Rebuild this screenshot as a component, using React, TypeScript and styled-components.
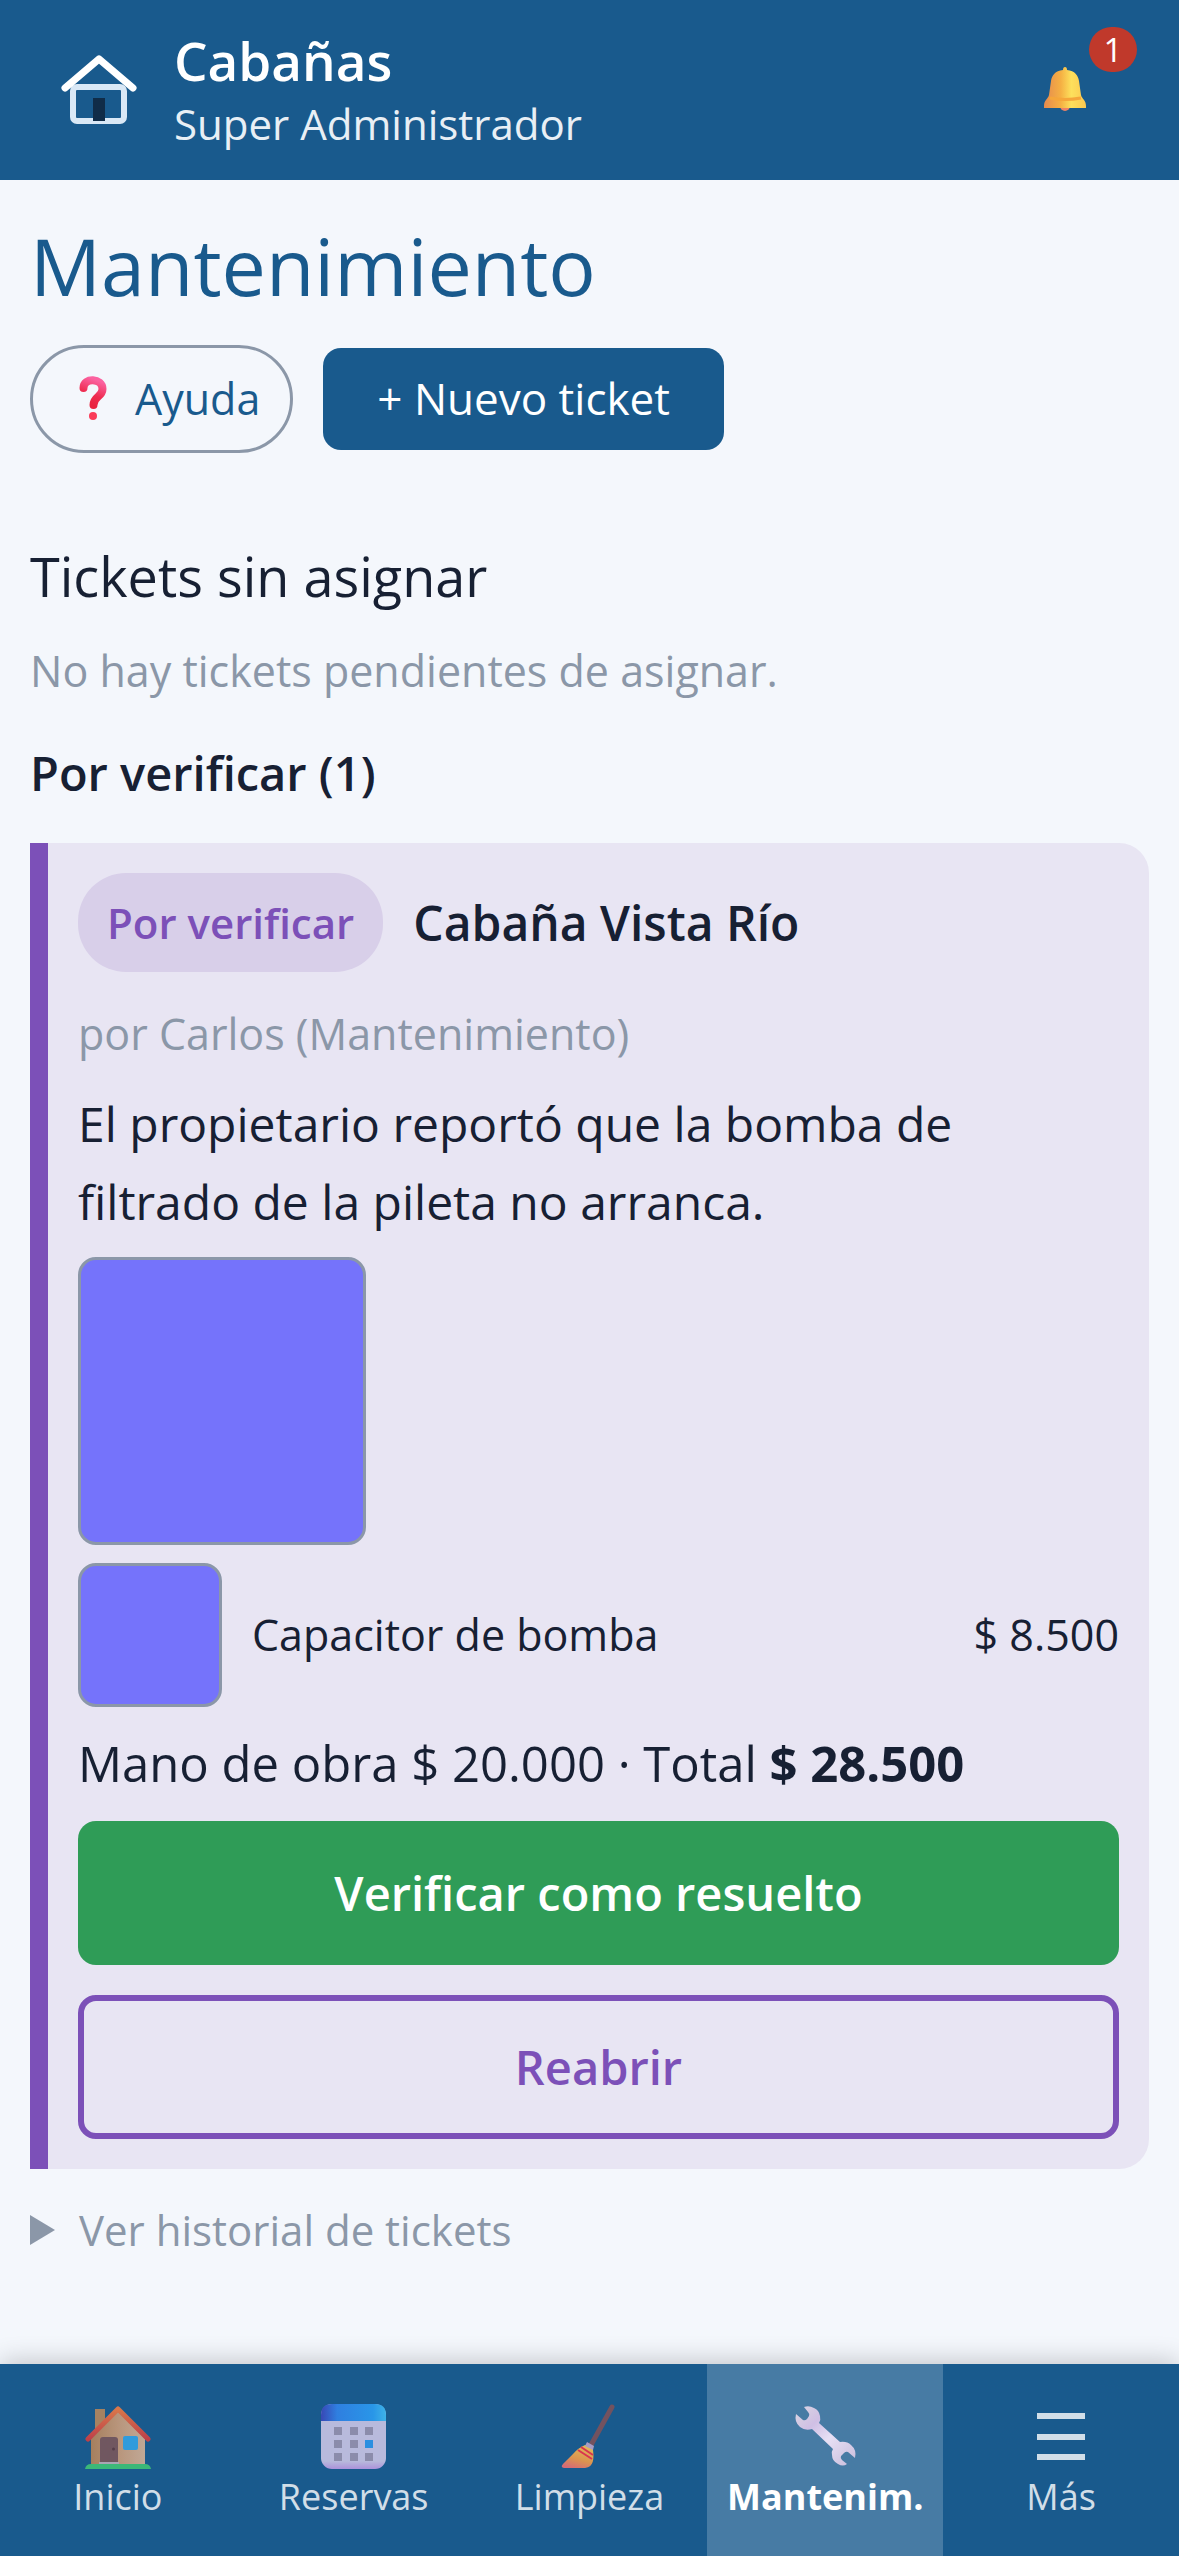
import React from 'react';
import styled, { createGlobalStyle } from 'styled-components';

const color = {
  primary: '#195a8d',
  page: '#f4f7fc',
  ink: '#172033',
  muted: '#8b97a8',
  violet: '#7c50b8',
  lilac: '#e8e5f3',
  lilacDeep: '#d8cfe9',
  green: '#2f9c57',
  red: '#c0392b',
  photo: '#7573fb',
};

const GlobalStyle = createGlobalStyle`
  *, *::before, *::after { box-sizing: border-box; }
  body { margin: 0; background: ${color.page}; color: ${color.ink}; font-family: "Segoe UI", "Open Sans", "Noto Sans", sans-serif; }
  h1, h2, h3, h4, p { margin: 0; padding: 0; }
  button { font-family: inherit; cursor: pointer; }
`;

const Page = styled.div`
  display: flex;
  flex-direction: column;
  min-height: 100vh;
`;

const Header = styled.header`
  display: flex;
  align-items: center;
  min-height: 180px;
  padding: 0 42px 0 60px;
  background: ${color.primary};
  color: #fff;
`;

const Brand = styled.div`
  display: flex;
  flex: 1;
  flex-direction: column;
  padding: 2px 0 0 36px;
`;

const BrandName = styled.span`
  font-size: 53px;
  font-weight: 600;
  line-height: 66px;
`;

const Role = styled.span`
  color: #e8eff5;
  font-size: 42px;
  line-height: 60px;
`;

const BellButton = styled.button`
  position: relative;
  display: grid;
  place-items: center;
  width: 144px;
  height: 132px;
  padding: 0 0 3px;
  border: 0;
  background: none;
`;

const Count = styled.span`
  position: absolute;
  top: 3px;
  right: 0;
  min-width: 48px;
  border-radius: 24px;
  background: ${color.red};
  color: #fff;
  font-size: 33px;
  line-height: 45px;
  text-align: center;
`;

const Main = styled.main`
  flex: 1;
  padding: 30px 30px 90px;
`;

const Title = styled.h1`
  color: ${color.primary};
  font-size: 79px;
  font-weight: 400;
  line-height: 112px;
`;

const Actions = styled.div`
  display: flex;
  align-items: center;
  gap: 30px;
  margin: 23px 0 87px;
`;

const HelpButton = styled.button`
  display: flex;
  align-items: center;
  gap: 28px;
  height: 108px;
  padding: 0 30px 2px 46px;
  border: 3px solid ${color.muted};
  border-radius: 54px;
  background: none;
  color: ${color.primary};
  font-size: 43px;
`;

const NewButton = styled.button`
  height: 102px;
  padding: 0 54px 2px;
  border: 0;
  border-radius: 18px;
  background: ${color.primary};
  color: #fff;
  font-size: 44px;
`;

const SectionTitle = styled.h2`
  font-size: 54px;
  font-weight: 400;
  line-height: 72px;
`;

const Empty = styled.p`
  margin: 29px 0 36px;
  color: ${color.muted};
  font-size: 43px;
  line-height: 60px;
`;

const GroupTitle = styled.h3`
  font-size: 47px;
  font-weight: 600;
  line-height: 72px;
`;

const Card = styled.article`
  display: flex;
  flex-direction: column;
  margin: 34px 0 31px;
  padding: 30px;
  border-left: 18px solid ${color.violet};
  border-radius: 0 30px 30px 0;
  background: ${color.lilac};
`;

const CardHead = styled.div`
  display: flex;
  align-items: center;
  gap: 30px;
`;

const CardTitle = styled.h4`
  font-size: 48px;
  font-weight: 600;
  line-height: 72px;
`;

const Badge = styled.span`
  padding: 18px 29px;
  border-radius: 48px;
  background: ${color.lilacDeep};
  color: ${color.violet};
  font-size: 42px;
  font-weight: 600;
  line-height: 63px;
`;

const Author = styled.p`
  margin: 32px 0 21px;
  color: ${color.muted};
  font-size: 43px;
  line-height: 60px;
`;

const Description = styled.p`
  font-size: 48px;
  line-height: 78px;
`;

const Photo = styled.button<{ $size: number }>`
  flex: none;
  width: ${(p) => p.$size}px;
  height: ${(p) => p.$size}px;
  padding: 0;
  border: 3px solid ${color.muted};
  border-radius: 18px;
  background: ${color.photo};
`;

const Gallery = styled.div`
  display: flex;
  flex-wrap: wrap;
  gap: 18px;
  margin: 16px 0 18px;
`;

const Part = styled.div`
  display: flex;
  align-items: center;
  gap: 30px;
  font-size: 43px;
  line-height: 60px;
`;

const PartName = styled.span`
  flex: 1;
`;

const Totals = styled.p`
  margin: 20px 0 22px;
  font-size: 49px;
  line-height: 72px;
`;

const CardActions = styled.div`
  display: flex;
  flex-direction: column;
  gap: 30px;
`;

const CardButton = styled.button<{ $outline?: boolean }>`
  height: 144px;
  border: ${(p) => (p.$outline ? `6px solid ${color.violet}` : '0')};
  border-radius: 18px;
  background: ${(p) => (p.$outline ? 'transparent' : color.green)};
  color: ${(p) => (p.$outline ? color.violet : '#fff')};
  font-size: 47px;
  font-weight: 600;
`;

const Summary = styled.summary`
  display: flex;
  align-items: center;
  gap: 24px;
  color: ${color.muted};
  font-size: 42px;
  line-height: 60px;
  cursor: pointer;
  list-style: none;

  &::before {
    content: "";
    border-top: 15px solid transparent;
    border-bottom: 15px solid transparent;
    border-left: 25px solid ${color.muted};
  }

  details[open] > &::before {
    transform: rotate(90deg);
  }
`;

const TabBar = styled.nav`
  position: sticky;
  bottom: 0;
  display: grid;
  grid-template-columns: repeat(5, 1fr);
  background: ${color.primary};
  box-shadow: 0 -3px 24px rgba(0, 0, 0, 0.2);
`;

const Tab = styled.a<{ $active?: boolean }>`
  display: flex;
  flex-direction: column;
  align-items: center;
  gap: 4px;
  height: 192px;
  padding-top: 39px;
  background: ${(p) => (p.$active ? '#477ba4' : 'transparent')};
  color: ${(p) => (p.$active ? '#fff' : '#d1dee8')};
  font-size: 36px;
  font-weight: ${(p) => (p.$active ? 700 : 400)};
  line-height: 48px;
  text-decoration: none;
`;

const LogoIcon = () => (
  <svg width="78" height="84" viewBox="0 0 78 84" fill="none" aria-hidden="true">
    <rect x="13" y="39" width="51" height="34" rx="4" stroke="#d9e8f6" strokeWidth="6" />
    <path d="M5 40 39 11 73 40" stroke="#fff" strokeWidth="7" strokeLinecap="round" strokeLinejoin="round" />
    <rect x="33" y="50" width="12" height="23" fill="#102c48" />
  </svg>
);

const BellIcon = () => (
  <svg width="42" height="44" viewBox="0 0 42 44" aria-hidden="true">
    <defs>
      <linearGradient id="bell">
        <stop offset="0" stopColor="#e58a4e" />
        <stop offset=".4" stopColor="#f5b043" />
        <stop offset=".65" stopColor="#fde05c" />
        <stop offset="1" stopColor="#fcc850" />
      </linearGradient>
    </defs>
    <circle cx="21" cy="39" r="5" fill="#ee8265" />
    <path d="M19 3q0-3 2-3t2 3c8 1 11 5 12 11l2 14c1 4 5 5 5 11v2H0v-2c0-6 4-7 5-11l2-14C8 8 11 4 19 3Z" fill="url(#bell)" />
    <path d="M6 31q15 3 31 0" stroke="#f5a63a" strokeWidth="3" fill="none" />
  </svg>
);

const QuestionIcon = () => (
  <svg width="28" height="44" viewBox="0 0 28 44" fill="none" aria-hidden="true">
    <defs>
      <linearGradient id="question" x1=".7" y1="0" x2=".4" y2="1">
        <stop offset="0" stopColor="#fb62a0" />
        <stop offset=".6" stopColor="#ee2c50" />
        <stop offset="1" stopColor="#e92440" />
      </linearGradient>
    </defs>
    <path d="M4.500 12C4.500 1 23.500 2 23.500 13c0 8-9 7-9 16" stroke="url(#question)" strokeWidth="8" strokeLinecap="round" />
    <circle cx="14" cy="40" r="4" fill="#fa3c58" />
  </svg>
);

const HouseIcon = () => (
  <svg width="66" height="66" viewBox="0 0 66 66" aria-hidden="true">
    <defs>
      <linearGradient id="wall">
        <stop offset="0" stopColor="#a57f5e" />
        <stop offset=".5" stopColor="#b8957b" />
        <stop offset="1" stopColor="#c0a896" />
      </linearGradient>
      <linearGradient id="roof" x1="0" y1="0" x2="0" y2="1">
        <stop offset="0" stopColor="#d9774a" />
        <stop offset="1" stopColor="#be4049" />
      </linearGradient>
    </defs>
    <rect x="10" y="6" width="10" height="24" fill="#a58262" />
    <path d="M6 34 33 8l27 26v27H6Z" fill="url(#wall)" />
    <path d="M3 36 33 6l30 30" fill="none" stroke="url(#roof)" strokeWidth="5" strokeLinecap="round" strokeLinejoin="round" />
    <path d="M15 61V37q0-3 3-3h12q3 0 3 3v24Z" fill="#705760" />
    <circle cx="28.500" cy="46" r="1.500" fill="#553e49" />
    <rect x="38" y="33" width="15" height="14" rx="2" fill="#309bdc" />
    <path d="M14 59h20v3H14Z" fill="#a9a5b4" />
    <path d="M0 66q1-5 6-5h54q5 0 6 5Z" fill="#3bb878" />
  </svg>
);

const CalendarIcon = () => (
  <svg width="66" height="66" viewBox="0 0 66 66" aria-hidden="true">
    <defs>
      <linearGradient id="calendar-top">
        <stop offset="0" stopColor="#3848b5" />
        <stop offset=".25" stopColor="#2f7fe0" />
        <stop offset=".8" stopColor="#2996e8" />
        <stop offset="1" stopColor="#3eb2e8" />
      </linearGradient>
      <linearGradient id="calendar-page" x1="0" y1="0" x2="0" y2="1">
        <stop offset=".88" stopColor="#b8badc" />
        <stop offset="1" stopColor="#ab92da" />
      </linearGradient>
    </defs>
    <rect x="0" y="1" width="65" height="65" rx="11" fill="url(#calendar-page)" />
    <path d="M0 18v-6Q0 1 11 1h43q11 0 11 11v6Z" fill="url(#calendar-top)" />
    {[24, 37, 50].map((y) =>
      [13, 29, 44].map((x) => (
        <rect key={`${x}-${y}`} x={x} y={y} width="8" height="8" fill={x === 44 && y === 37 ? '#2b8fe0' : '#8b8cab'} />
      )),
    )}
  </svg>
);

const BroomIcon = () => (
  <svg width="66" height="66" viewBox="0 0 66 66" aria-hidden="true">
    <defs>
      <linearGradient id="broom" x1=".7" y1="0" x2=".3" y2="1">
        <stop offset="0" stopColor="#e0b95a" />
        <stop offset=".6" stopColor="#dc944f" />
        <stop offset="1" stopColor="#d56b76" />
      </linearGradient>
    </defs>
    <path d="M56 4 35 42" stroke="#73525f" strokeWidth="5" strokeLinecap="round" />
    <path d="M29 42q8 0 8 5c1 8 1 17-8 18H8q-4-1-1-4 5-5 10-10 5-6 12-9Z" fill="url(#broom)" />
    <path d="m31 39 7 4-1 4-8-4Z" fill="#a79bc3" />
    <path d="m22 47 14 9M25 44l12 8" stroke="#d9344f" strokeWidth="2" />
  </svg>
);

const WrenchIcon = () => (
  <svg width="66" height="66" viewBox="0 0 66 66" aria-hidden="true">
    <defs>
      <linearGradient id="wrench" x1="0" y1="0" x2="1" y2="1">
        <stop offset="0" stopColor="#dcd7e2" />
        <stop offset=".3" stopColor="#cfbfe4" />
        <stop offset=".55" stopColor="#e7e0f5" />
        <stop offset="1" stopColor="#c9bcdb" />
      </linearGradient>
    </defs>
    <path
      d="M12 4q5-2 10 1 5 2 6 8 1 4-1 7l21 19q7-1 11 3 6 5 4 13l-7-6q-2-1-4 1l-3 3q-1 2 1 4l5 4q-4 3-9 0-6-3-6-9-1-3 1-6L20 26q-7 2-12-2-6-5-4-13l7 6q2 1 4-1l2-3q1-2-1-4Z"
      fill="url(#wrench)"
    />
  </svg>
);

const MenuIcon = () => (
  <svg width="66" height="66" viewBox="0 0 66 66" aria-hidden="true">
    <path d="M9 13h48M9 34h48M9 54h48" stroke="#d1dee8" strokeWidth="6" />
  </svg>
);

const tabs = [
  { label: 'Inicio', Icon: HouseIcon },
  { label: 'Reservas', Icon: CalendarIcon },
  { label: 'Limpieza', Icon: BroomIcon },
  { label: 'Mantenim.', Icon: WrenchIcon, active: true },
  { label: 'Más', Icon: MenuIcon },
];

export default function App() {
  return (
    <Page>
      <GlobalStyle />
      <Header>
        <LogoIcon />
        <Brand>
          <BrandName>Cabañas</BrandName>
          <Role>Super Administrador</Role>
        </Brand>
        <BellButton type="button" aria-label="Notificaciones">
          <BellIcon />
          <Count>1</Count>
        </BellButton>
      </Header>

      <Main>
        <Title>Mantenimiento</Title>
        <Actions>
          <HelpButton type="button">
            <QuestionIcon />
            Ayuda
          </HelpButton>
          <NewButton type="button">+ Nuevo ticket</NewButton>
        </Actions>

        <SectionTitle>Tickets sin asignar</SectionTitle>
        <Empty>No hay tickets pendientes de asignar.</Empty>

        <GroupTitle>Por verificar (1)</GroupTitle>
        <Card>
          <CardHead>
            <Badge>Por verificar</Badge>
            <CardTitle>Cabaña Vista Río</CardTitle>
          </CardHead>
          <Author>por Carlos (Mantenimiento)</Author>
          <Description>El propietario reportó que la bomba de filtrado de la pileta no arranca.</Description>
          <Gallery>
            <Photo type="button" $size={288} aria-label="Foto del ticket" />
          </Gallery>
          <Part>
            <Photo type="button" $size={144} aria-label="Foto del repuesto" />
            <PartName>Capacitor de bomba</PartName>
            <span>$ 8.500</span>
          </Part>
          <Totals>
            Mano de obra $ 20.000 · Total <strong>$ 28.500</strong>
          </Totals>
          <CardActions>
            <CardButton type="button">Verificar como resuelto</CardButton>
            <CardButton type="button" $outline>
              Reabrir
            </CardButton>
          </CardActions>
        </Card>

        <details>
          <Summary>Ver historial de tickets</Summary>
        </details>
      </Main>

      <TabBar aria-label="Principal">
        {tabs.map(({ label, Icon, active }) => (
          <Tab key={label} href="#" $active={active} aria-current={active ? 'page' : undefined}>
            <Icon />
            {label}
          </Tab>
        ))}
      </TabBar>
    </Page>
  );
}
